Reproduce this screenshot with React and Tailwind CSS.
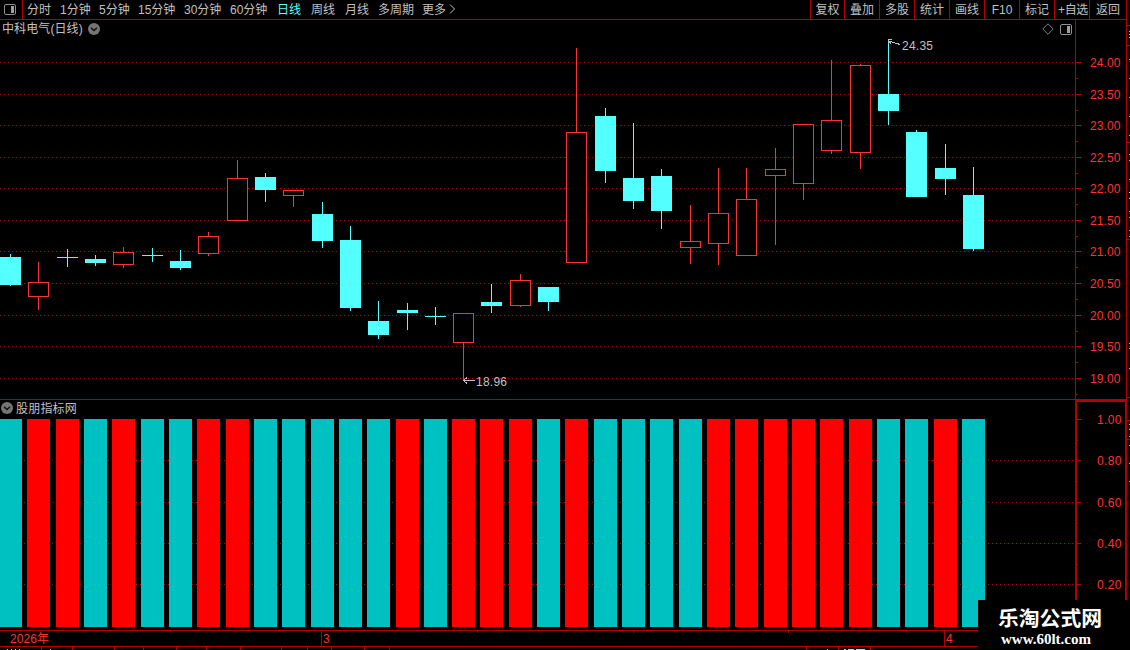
const PERIODS = [
  { label: '分时', cls: 'w-[33px]' },
  { label: '1分钟', cls: 'w-[39px]' },
  { label: '5分钟', cls: 'w-[39px]' },
  { label: '15分钟', cls: 'w-[46px]' },
  { label: '30分钟', cls: 'w-[46px]' },
  { label: '60分钟', cls: 'w-[47px]' },
  { label: '日线', cls: 'w-[34px] text-[#54ffff]' },
  { label: '周线', cls: 'w-[34px]' },
  { label: '月线', cls: 'w-[33px]' },
  { label: '多周期', cls: 'w-[44px]' },
  { label: '更多', cls: 'w-[27px]' },
];

const TOOLS = [
  { label: '复权', cls: 'w-[34px]' },
  { label: '叠加', cls: 'w-[35px]' },
  { label: '多股', cls: 'w-[35px]' },
  { label: '统计', cls: 'w-[35px]' },
  { label: '画线', cls: 'w-[35px]' },
  { label: 'F10', cls: 'w-[35px]' },
  { label: '标记', cls: 'w-[35px]' },
  { label: '+自选', cls: 'w-[35px] pl-[2px] tracking-[-0.3px]' },
  { label: '返回', cls: 'w-[37px]' },
];

// [wick x, high, body top, body bottom, low, rising, signal up]
const CANDLES = [
  [10, 254, 257, 285, 286, 0, 0],
  [38, 262, 282, 297, 310, 1, 1],
  [67, 249, 257, 258, 267, 0, 1],
  [95, 255, 259, 263, 266, 0, 0],
  [123, 247, 252, 265, 268, 1, 1],
  [152, 248, 255, 256, 262, 0, 0],
  [180, 250, 261, 268, 270, 0, 0],
  [208, 232, 236, 254, 256, 1, 1],
  [237, 160, 178, 221, 221, 1, 1],
  [265, 173, 177, 190, 202, 0, 0],
  [293, 190, 190, 196, 207, 1, 0],
  [322, 202, 214, 241, 248, 0, 0],
  [350, 226, 240, 308, 311, 0, 0],
  [378, 301, 321, 335, 339, 0, 0],
  [407, 303, 310, 313, 330, 0, 1],
  [435, 307, 316, 317, 325, 0, 0],
  [463, 313, 313, 343, 381, 1, 1],
  [491, 284, 302, 306, 313, 0, 1],
  [520, 274, 280, 306, 307, 1, 1],
  [548, 287, 287, 302, 311, 0, 0],
  [576, 48, 132, 263, 263, 1, 1],
  [605, 108, 116, 171, 183, 0, 0],
  [633, 123, 178, 201, 209, 0, 0],
  [661, 169, 176, 211, 229, 0, 0],
  [690, 205, 241, 248, 264, 1, 0],
  [718, 168, 213, 244, 265, 1, 1],
  [746, 168, 199, 256, 256, 1, 1],
  [775, 148, 169, 176, 245, 1, 1],
  [803, 124, 124, 184, 200, 1, 1],
  [831, 60, 120, 151, 154, 1, 1],
  [860, 64, 65, 153, 169, 1, 1],
  [888, 40, 94, 111, 125, 0, 0],
  [916, 130, 132, 197, 197, 0, 0],
  [945, 144, 168, 179, 195, 0, 1],
  [973, 167, 195, 249, 251, 0, 0],
];

const PRICES = [
  ['24.00', 62], ['23.50', 94], ['23.00', 125], ['22.50', 157], ['22.00', 188], ['21.50', 220],
  ['21.00', 251], ['20.50', 283], ['20.00', 315], ['19.50', 346], ['19.00', 378],
];

const LEVELS = [['1.00', 419], ['0.80', 460], ['0.60', 502], ['0.40', 543], ['0.20', 584]];

const FOOT_TICKS = [41, 72, 114, 143, 176, 206, 240, 281, 307, 331, 364, 389, 806, 838, 870];
const SIDE_LINES = [25, 45, 142, 239, 397, 420, 439];
const SIDE_MARKS = [31, 34, 37, 59, 78, 97, 116, 135, 154, 160, 179, 192, 198, 211, 217, 230, 236, 343, 348, 368, 424, 429, 436, 445, 463, 481];

export default function App() {
  return (
    <div className="relative flex h-[650px] w-[1130px] overflow-hidden bg-black font-['Liberation_Sans','Noto_Sans_CJK_SC',sans-serif] text-[12px] leading-none text-[#c0c0c0]">
      <div className="flex w-[1127px] flex-none flex-col">
        <Toolbar />
        <PricePanel />
        <SignalPanel />
        <TimeAxis />
      </div>
      <SideStrip />
      <div className="absolute bottom-0 right-0 flex h-[50px] w-[152px] flex-col items-center bg-black text-white">
        <span className="mt-[8px] -ml-[8px] text-[20.8px] font-bold leading-[22px] whitespace-nowrap">乐淘公式网</span>
        <span className="-ml-[16px] font-['Liberation_Serif',serif] text-[15px] font-bold leading-[18px]">www.60lt.com</span>
      </div>
    </div>
  );
}

function Toolbar() {
  return (
    <div className="flex h-[20px] flex-none border-r border-b border-[#b40000]">
      <div className="flex w-[23px] flex-none items-center border-r border-[#b40000] pl-[4px]">
        <PanelIcon />
      </div>
      <div className="flex flex-1 items-center pl-[4px]">
        {PERIODS.map((p) => (
          <span key={p.label} className={`flex-none whitespace-nowrap ${p.cls}`}>{p.label}</span>
        ))}
        <svg width="7" height="10" viewBox="0 0 7 10" fill="none" stroke="#c0c0c0" className="mb-[2px]">
          <path d="M1 0.5L5.5 5L1 9.5" />
        </svg>
      </div>
      <div className="flex flex-none">
        {TOOLS.map((t) => (
          <span key={t.label} className={`flex items-center justify-center whitespace-nowrap border-l border-[#b40000] ${t.cls}`}>{t.label}</span>
        ))}
      </div>
    </div>
  );
}

function PricePanel() {
  return (
    <div className="flex h-[380px] flex-none border-r border-b border-[#b40000]">
      <div className="flex w-[1075px] flex-none flex-col">
        <div className="flex h-[18px] items-center pl-[2px] pr-[3px]">
          <span className="w-[86px] whitespace-nowrap tracking-[0.1px]">中科电气(日线)</span>
          <Chevron />
          <svg className="mr-[6px] ml-auto" width="12" height="12" viewBox="0 0 12 12" fill="none" stroke="#808080">
            <path d="M6 0.8L11.2 6L6 11.2L0.8 6Z" />
          </svg>
          <PanelIcon />
        </div>
        <svg width="1075" height="361" viewBox="0 38 1075 361" shapeRendering="crispEdges">
          {PRICES.map(([label, y]) => <GridLine key={label} y={y} />)}
          {CANDLES.map((c) => <Candle key={c[0]} data={c} />)}
          <g fill="none" stroke="#c0c0c0">
            <path d="M475 380.5H463.5M467 377.5L463.5 380.5L467 383.5" />
            <path d="M900 44.5L889 41M892 39.5H888.5V43M889 41L891.5 44.5" />
          </g>
          <text x="476" y="386" fill="#c0c0c0" textLength="31" lengthAdjust="spacing">18.96</text>
          <text x="902" y="50" fill="#c0c0c0" textLength="31" lengthAdjust="spacing">24.35</text>
        </svg>
      </div>
      <svg width="51" height="379" viewBox="1075 20 51 379" shapeRendering="crispEdges">
        <rect x="1075" y="20" width="1" height="379" fill="#b40000" />
        {PRICES.map(([label, y]) => <AxisMark key={label} label={label} x={1090} y={y} mid={y + 16} />)}
      </svg>
    </div>
  );
}

function SignalPanel() {
  return (
    <div className="flex h-[230px] flex-none">
      <div className="flex w-[1075px] flex-none flex-col">
        <div className="flex h-[16px] items-center gap-[3px] pl-px">
          <Chevron />
          <span className="pt-px tracking-[0.2px]">股朋指标网</span>
        </div>
        <svg width="1075" height="214" viewBox="0 416 1075 214" shapeRendering="crispEdges">
          {LEVELS.slice(1).map(([label, y]) => <GridLine key={label} y={y} />)}
          {CANDLES.map(([x, , , , , , up]) => (
            <rect key={x} x={x - 11} y="419" width="23" height="208" fill={up ? '#ff0000' : '#00c1c1'} />
          ))}
        </svg>
      </div>
      <div className="w-[52px] border-2 border-b-0 border-[#b40000]">
        <svg width="48" height="228" viewBox="1077 402 48 228" shapeRendering="crispEdges">
          {LEVELS.map(([label, y]) => <AxisMark key={label} label={label} x={1097} y={y} mid={y + 21} />)}
        </svg>
      </div>
    </div>
  );
}

function TimeAxis() {
  return (
    <>
      <div className="flex h-[17px] flex-none items-center border-y border-[#b40000] text-[#ff3232]">
        <span className="w-[321px] pl-[10px] tracking-[0.1px]">2026年</span>
        <span className="flex h-full w-[156px] items-center border-l border-[#b40000] pl-px">3</span>
        <span className="h-[2px] w-[156px] self-start border-l border-[#b40000]" />
        <span className="h-[2px] w-[155px] self-start border-l border-[#b40000]" />
        <span className="h-[2px] w-[156px] self-start border-l border-[#b40000]" />
        <span className="flex h-full items-center border-l border-[#b40000] pl-px">4</span>
      </div>
      <svg width="1127" height="3" viewBox="0 647 1127 3" shapeRendering="crispEdges">
        {FOOT_TICKS.map((x) => <rect key={x} x={x} y="647" width="1" height="3" fill="#b40000" />)}
        <path d="M7 649.5H8M11 649.5H12M15 649.5H16M19 649.5H20M50 649.5H51M827 649.5H828" stroke="#c0c0c0" />
        <path d="M844 649.5H846M848 649.5H854M856 649.5H865" stroke="#54ffff" />
      </svg>
    </>
  );
}

function SideStrip() {
  return (
    <svg width="3" height="650" viewBox="1127 0 3 650" shapeRendering="crispEdges">
      {SIDE_LINES.map((y) => <rect key={y} x="1127" y={y} width="3" height="1" fill="#b40000" />)}
      {SIDE_MARKS.map((y) => <rect key={y} x="1129" y={y} width="1" height="1" fill="#c0c0c0" />)}
    </svg>
  );
}

function GridLine({ y }) {
  return <line x1="0" x2="1075" y1={y + 0.5} y2={y + 0.5} stroke="#b40000" strokeDasharray="1 3" />;
}

function Candle({ data: [x, high, top, bottom, low, rising] }) {
  const color = rising ? '#ff3232' : '#54ffff';
  return (
    <g>
      <rect x={x} y={high} width="1" height={low - high} fill={color} />
      <rect x={x - 10} y={top} width="21" height={bottom - top} fill={color} />
      {rising === 1 && <rect x={x - 9} y={top + 1} width="19" height={bottom - top - 2} fill="#000" />}
    </g>
  );
}

function AxisMark({ label, x, y, mid }) {
  return (
    <g>
      <rect x="1076" y={y} width="5" height="1" fill="#b40000" />
      <rect x="1076" y={mid} width="2" height="1" fill="#b40000" />
      <text x={x} y={y + 5} fill="#ff3232" textLength={label.length * 6.1} lengthAdjust="spacing">{label}</text>
    </g>
  );
}

function PanelIcon() {
  return (
    <svg className="flex-none" width="12" height="11" viewBox="0 0 12 11">
      <rect x="0.5" y="0.5" width="11" height="10" rx="1.5" fill="none" stroke="#909090" />
      <rect x="7" y="2" width="3" height="7" fill="#a0a0a0" />
    </svg>
  );
}

function Chevron() {
  return (
    <svg className="flex-none" width="12" height="12" viewBox="0 0 12 12">
      <circle cx="6" cy="6" r="6" fill="#757575" />
      <path d="M3 4.8L6 7.5L9 4.8" fill="none" stroke="#111" strokeWidth="1.5" />
    </svg>
  );
}
